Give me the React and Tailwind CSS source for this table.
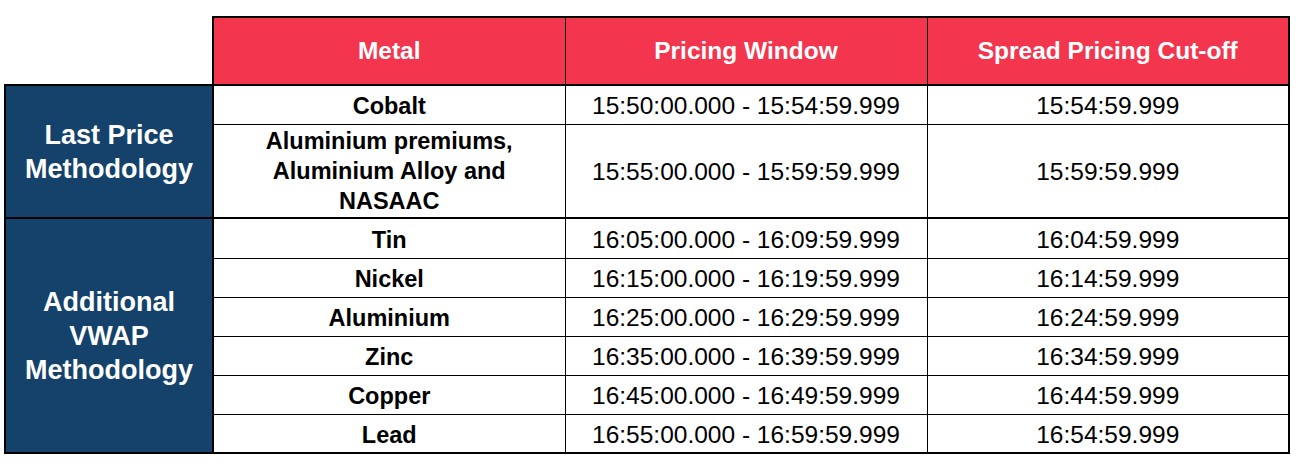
import React from 'react';

const rows = [
  { metal: 'Tin', window: '16:05:00.000 - 16:09:59.999', cutoff: '16:04:59.999' },
  { metal: 'Nickel', window: '16:15:00.000 - 16:19:59.999', cutoff: '16:14:59.999' },
  { metal: 'Aluminium', window: '16:25:00.000 - 16:29:59.999', cutoff: '16:24:59.999' },
  { metal: 'Zinc', window: '16:35:00.000 - 16:39:59.999', cutoff: '16:34:59.999' },
  { metal: 'Copper', window: '16:45:00.000 - 16:49:59.999', cutoff: '16:44:59.999' },
  { metal: 'Lead', window: '16:55:00.000 - 16:59:59.999', cutoff: '16:54:59.999' },
];

const App = () => {
  const head = 'bg-[#f3364e] text-white font-bold text-[24.5px] text-center border-2 border-black';
  const group = 'bg-[#15426b] text-white font-bold text-[27px] leading-[34px] text-center border-2 border-black';
  const metal = 'font-bold text-[23.5px] leading-[30px] text-center border border-black text-black';
  const cell = 'text-[24.5px] leading-[30px] text-center border border-black text-black pt-[3px]';

  return (
    <div
      className="w-[1298px] h-[464px] bg-white pt-4 pl-1"
      style={{ fontFamily: '"Liberation Sans", Arial, sans-serif' }}
    >
      <table className="border-collapse table-fixed w-[1284px]">
        <colgroup>
          <col className="w-[208px]" />
          <col className="w-[352px]" />
          <col className="w-[362px]" />
          <col className="w-[362px]" />
        </colgroup>
        <thead>
          <tr className="h-[68px]">
            <th className="border-0 bg-white"></th>
            <th className={head + ' border-r'}>Metal</th>
            <th className={head + ' border-x'}>Pricing Window</th>
            <th className={head + ' border-l'}>Spread Pricing Cut-off</th>
          </tr>
        </thead>
        <tbody>
          <tr className="h-[39px]">
            <td rowSpan={2} className={group + ' leading-[33px]'}>
              Last Price
              <br />
              Methodology
            </td>
            <td className={metal + ' pt-[3px] border-t-2'}>Cobalt</td>
            <td className={cell + ' border-t-2'}>15:50:00.000 - 15:54:59.999</td>
            <td className={cell + ' border-t-2 border-r-2'}>15:54:59.999</td>
          </tr>
          <tr className="h-[94px]">
            <td className={metal + ' border-b-2'}>
              Aluminium premiums,
              <br />
              Aluminium Alloy and
              <br />
              NASAAC
            </td>
            <td className={cell + ' border-b-2'}>15:55:00.000 - 15:59:59.999</td>
            <td className={cell + ' border-b-2 border-r-2'}>15:59:59.999</td>
          </tr>
          {rows.map((r, i) => (
            <tr key={r.metal} className={i === 0 ? 'h-[40px]' : 'h-[39px]'}>
              {i === 0 && (
                <td rowSpan={rows.length} className={group}>
                  Additional
                  <br />
                  VWAP
                  <br />
                  Methodology
                </td>
              )}
              <td className={metal + ' pt-[3px]' + (i === rows.length - 1 ? ' border-b-2' : '')}>{r.metal}</td>
              <td className={cell + (i === rows.length - 1 ? ' border-b-2' : '')}>{r.window}</td>
              <td className={cell + ' border-r-2' + (i === rows.length - 1 ? ' border-b-2' : '')}>{r.cutoff}</td>
            </tr>
          ))}
        </tbody>
      </table>
    </div>
  );
};

export default App;
